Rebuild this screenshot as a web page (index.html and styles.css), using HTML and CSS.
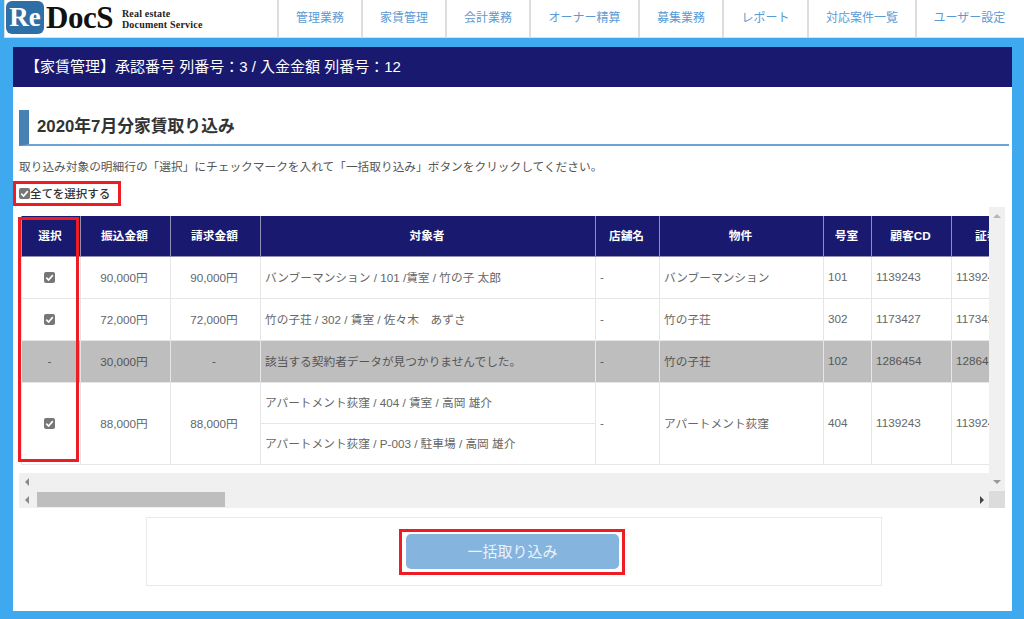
FILE: index.html
```html
<!DOCTYPE html>
<html lang="ja">
<head>
<meta charset="utf-8">
<title>ReDocS</title>
<link rel="stylesheet" href="styles.css">
</head>
<body>
<header class="topbar">
  <div class="brand">
    <span class="brand-re">Re</span><span class="brand-docs">DocS</span>
    <span class="brand-sub">Real estate<br>Document Service</span>
  </div>
  <nav class="nav">
    <a class="w84">管理業務</a><a class="w84">家賃管理</a><a class="w84">会計業務</a><a class="w109">オーナー精算</a><a class="w84">募集業務</a><a class="w85">レポート</a><a class="w108">対応案件一覧</a><a class="w107">ユーザー設定</a>
  </nav>
</header>
<main class="panel">
  <h1 class="titlebar">【家賃管理】承認番号 列番号：3 / 入金金額 列番号：12</h1>
  <h2 class="heading">2020年7月分家賃取り込み</h2>
  <p class="lead">取り込み対象の明細行の「選択」にチェックマークを入れて「一括取り込み」ボタンをクリックしてください。</p>
  <label class="all"><span class="check check-sm"><svg viewBox="0 0 12 12"><path d="M2.5 6.2 5 8.8 9.6 3.4" /></svg></span>全てを選択する</label>
  <div class="scroller">
    <div class="tablewrap">
      <table class="data">
        <colgroup>
          <col class="c1"><col class="c2"><col class="c3"><col class="c4"><col class="c5"><col class="c6"><col class="c7"><col class="c8"><col class="c9">
        </colgroup>
        <thead>
          <tr><th>選択</th><th>振込金額</th><th>請求金額</th><th>対象者</th><th>店舗名</th><th>物件</th><th>号室</th><th>顧客CD</th><th>証券番号</th></tr>
        </thead>
        <tbody>
          <tr>
            <td class="ctr"><span class="check"><svg viewBox="0 0 12 12"><path d="M2.5 6.2 5 8.8 9.6 3.4" /></svg></span></td>
            <td class="ctr">90,000円</td><td class="ctr">90,000円</td>
            <td>バンブーマンション / 101 /賃室 / 竹の子 太郎</td><td>-</td><td>バンブーマンション</td><td>101</td><td>1139243</td><td>1139243</td>
          </tr>
          <tr>
            <td class="ctr"><span class="check"><svg viewBox="0 0 12 12"><path d="M2.5 6.2 5 8.8 9.6 3.4" /></svg></span></td>
            <td class="ctr">72,000円</td><td class="ctr">72,000円</td>
            <td>竹の子荘 / 302 / 賃室 / 佐々木　あずさ</td><td>-</td><td>竹の子荘</td><td>302</td><td>1173427</td><td>1173427</td>
          </tr>
          <tr class="none">
            <td class="ctr">-</td><td class="ctr">30,000円</td><td class="ctr">-</td>
            <td>該当する契約者データが見つかりませんでした。</td><td>-</td><td>竹の子荘</td><td>102</td><td>1286454</td><td>1286454</td>
          </tr>
          <tr>
            <td class="ctr" rowspan="2"><span class="check"><svg viewBox="0 0 12 12"><path d="M2.5 6.2 5 8.8 9.6 3.4" /></svg></span></td>
            <td class="ctr" rowspan="2">88,000円</td><td class="ctr" rowspan="2">88,000円</td>
            <td>アパートメント荻窪 / 404 / 賃室 / 高岡 雄介</td><td rowspan="2">-</td><td rowspan="2">アパートメント荻窪</td><td rowspan="2">404</td><td rowspan="2">1139243</td><td rowspan="2">1139243</td>
          </tr>
          <tr>
            <td>アパートメント荻窪 / P-003 / 駐車場 / 高岡 雄介</td>
          </tr>
        </tbody>
      </table>
    </div>
    <div class="vbar"><span class="arrow up"></span><span class="arrow down"></span></div>
    <div class="hbar inner"><span class="arrow left"></span></div>
    <div class="hbar lower"><span class="arrow left"></span><span class="thumb"></span><span class="arrow right"></span></div>
    <div class="corner"></div>
  </div>
  <div class="actions"><button class="submit" type="button">一括取り込み</button></div>
  <span class="mark mark-all"></span>
  <span class="mark mark-col"></span>
  <span class="mark mark-btn"></span>
</main>
</body>
</html>
```
FILE: styles.css
```css
* { box-sizing: border-box; }
html, body { margin: 0; padding: 0; }
body {
  width: 1024px;
  height: 619px;
  overflow: hidden;
  background: #3fa9ef;
  font-family: "Liberation Sans", "Noto Sans CJK JP", sans-serif;
  color: #555;
}
.topbar {
  height: 38px;
  margin: 0 0 0 4px;
  display: flex;
  background: #fff;
  border-left: 1px solid #ddd;
  border-bottom: 1px solid #ddd;
}
.brand {
  width: 272px;
  display: flex;
  align-items: flex-start;
  padding-left: 1px;
  font-family: "Liberation Serif", serif;
  font-weight: 700;
}
.brand-re {
  flex: none;
  width: 38px;
  height: 33px;
  margin-top: 1px;
  border-radius: 6px;
  background: #2f6fa8;
  color: #fff;
  font-size: 27px;
  line-height: 33px;
  text-align: center;
}
.brand-docs {
  margin: 1px 0 0 2px;
  color: #111;
  font-size: 31px;
  line-height: 33px;
  letter-spacing: -0.5px;
}
.brand-sub {
  margin: 8px 0 0 9px;
  color: #222;
  font-size: 10px;
  line-height: 11px;
  letter-spacing: 0.2px;
  white-space: nowrap;
}
.nav { display: flex; flex: 1; }
.nav a {
  border-left: 2px solid #ddd;
  color: #5b9bd5;
  font-family: "Noto Sans CJK JP", sans-serif;
  font-size: 12px;
  line-height: 34px;
  text-align: center;
}
.w84 { width: 84px; }
.w85 { width: 85px; }
.w107 { width: 107px; }
.w108 { width: 108px; }
.w109 { width: 109px; }

.panel {
  position: relative;
  width: 999px;
  height: 564px;
  margin: 9px 0 0 13px;
  background: #fff;
}
.titlebar {
  height: 40px;
  margin: 0;
  padding-left: 12px;
  background: #191970;
  color: #fff;
  font-family: "Liberation Sans", "Noto Sans CJK JP", sans-serif;
  font-size: 15px;
  font-weight: 400;
  line-height: 39px;
}
.heading {
  height: 36px;
  margin: 23px 3px 0 6px;
  padding-left: 8px;
  border-left: 10px solid #4682b4;
  border-bottom: 2px solid #6ba3d6;
  color: #333;
  font-family: "Liberation Sans", "Noto Sans CJK JP", sans-serif;
  font-size: 16.8px;
  font-weight: 700;
  line-height: 34px;
}
.lead {
  margin: 12px 0 0 6px;
  color: #555;
  font-family: "Noto Sans CJK JP", sans-serif;
  font-size: 11.7px;
  line-height: 16px;
}
.all {
  display: flex;
  align-items: center;
  height: 16px;
  margin: 11px 0 0 6px;
  color: #333;
  font-family: "Noto Sans CJK JP", sans-serif;
  font-size: 11.5px;
  font-weight: 500;
}
.check {
  display: inline-block;
  width: 11px;
  height: 11px;
  border-radius: 2px;
  background: #767676;
  vertical-align: middle;
}
.check svg { display: block; width: 11px; height: 11px; }
.check path { fill: none; stroke: #fff; stroke-width: 1.8; }
.check-sm { flex: none; }

.scroller {
  display: grid;
  grid-template-columns: 970px 16px;
  grid-template-rows: 266px 18px 17px;
  margin: 6px 0 0 6px;
  width: 986px;
}
.tablewrap {
  overflow: hidden;
  padding: 9px 0 0 2px;
}
.data {
  width: 1026px;
  table-layout: fixed;
  border-collapse: collapse;
  font-size: 11.7px;
  color: #666;
}
.c1 { width: 59px; }
.c2 { width: 90px; }
.c3 { width: 90px; }
.c4 { width: 335px; }
.c5 { width: 64px; }
.c6 { width: 164px; }
.c7 { width: 48px; }
.c8 { width: 80px; }
.c9 { width: 96px; }
.data th {
  height: 40px;
  padding: 0 2px 2px 0;
  background: #191970;
  border: 1px solid #8f8fb8;
  border-top: 0;
  color: #fff;
  font-size: 11.7px;
  font-weight: 700;
  text-align: center;
}
.data td {
  height: 42px;
  padding: 0 4px 2px;
  border: 1px solid #e6e6e6;
  white-space: nowrap;
}
.data tbody tr:nth-child(n+4) td { height: 41px; }
.data .ctr { padding-left: 2px; padding-right: 5px; text-align: center; }
.none td { background: #bebebe; color: #555; }

.vbar {
  position: relative;
  background: #f0f0f0;
  grid-row: 1 / span 2;
  grid-column: 2;
}
.hbar {
  position: relative;
  background: #f0f0f0;
  grid-column: 1;
}
.hbar.inner { grid-row: 2; }
.hbar.lower { grid-row: 3; }
.corner { grid-row: 3; grid-column: 2; background: #dcdcdc; }
.arrow { position: absolute; width: 0; height: 0; border: 4px solid transparent; }
.arrow.up { top: 7px; left: 4px; border-bottom-color: #b5b5b5; border-top-width: 0; }
.arrow.down { bottom: 7px; left: 4px; border-top-color: #9a9a9a; border-bottom-width: 0; }
.arrow.left { top: 5px; left: 6px; border-right-color: #8a8a8a; border-left-width: 0; }
.arrow.right { top: 5px; right: 5px; border-left-color: #444; border-right-width: 0; }
.thumb {
  position: absolute;
  top: 1px;
  bottom: 1px;
  left: 18px;
  width: 188px;
  background: #bebebe;
}
.actions {
  display: flex;
  justify-content: center;
  align-items: center;
  width: 736px;
  height: 69px;
  margin: 9px 0 0 133px;
  padding-right: 3px;
  border: 1px solid #e9e9e9;
}
.submit {
  width: 213px;
  height: 35px;
  padding: 0 0 2px;
  border: 0;
  border-radius: 5px;
  background: #85b4de;
  color: #eaf2fa;
  font-family: "Noto Sans CJK JP", sans-serif;
  font-size: 15px;
}
.mark { position: absolute; border: 3px solid #ee1c25; pointer-events: none; }
.mark-all { left: 0; top: 134px; width: 108px; height: 25px; }
.mark-col { left: 5px; top: 170px; width: 61px; height: 245px; }
.mark-btn { left: 386px; top: 482px; width: 226px; height: 46px; }
```
